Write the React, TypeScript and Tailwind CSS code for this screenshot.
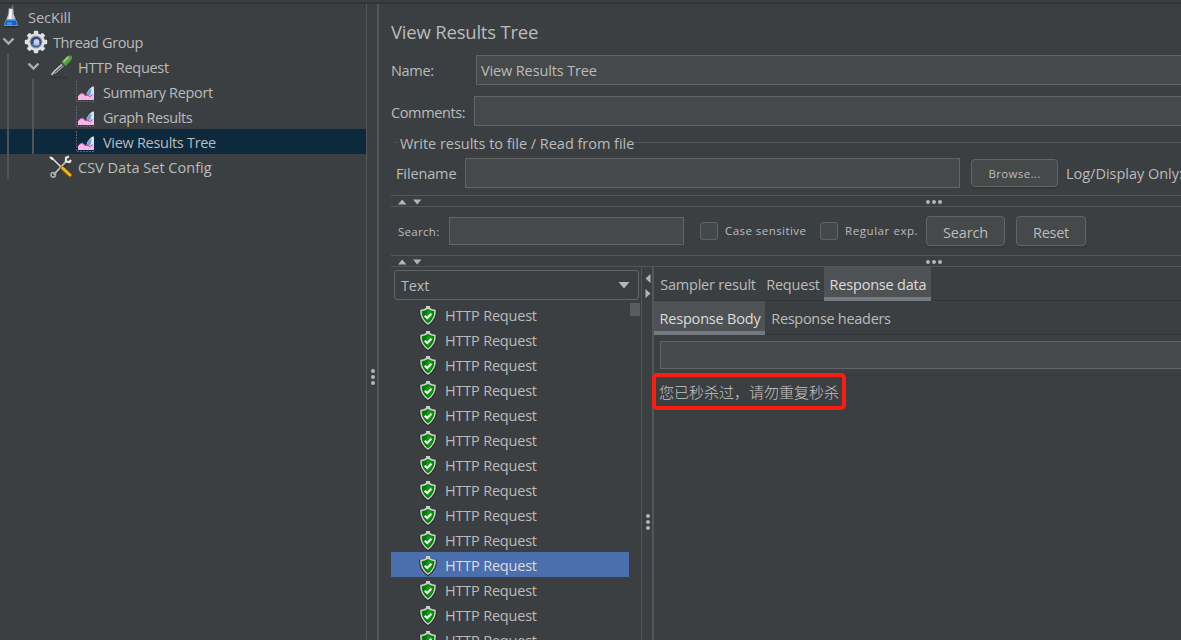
import type { ReactNode } from 'react'

interface TreeNode {
    label: string
    pad: string
    icon: ReactNode
    track: string
    guides: number
    open?: boolean
    selected?: boolean
}

function FlaskIcon() {
    return (
        <svg width="16" height="23" viewBox="0 0 16 23" className="shrink-0">
            <ellipse cx="8" cy="21" rx="7.8" ry="1.8" fill="#2b2d2f" />
            <path d="M5.700 3.500 L10.300 3.500 L10.600 9 L14.800 19.500 Q15 21 13.300 21 L2.700 21 Q1 21 1.200 19.500 L5.400 9 Z" fill="#bcc5cd" />
            <path d="M6.800 4 L8.800 4 L8.500 14 L5.500 14 Z" fill="#f3f7fa" />
            <path d="M3.800 14 L12.200 14 L14.300 19.500 Q14.300 20.600 13.200 20.600 L2.800 20.600 Q1.700 20.600 1.700 19.500 Z" fill="#0f62c4" />
            <path d="M4.400 14 H11.600 L12.200 15.500 H3.800 Z" fill="#62a9ee" />
            <path d="M4.500 17 L9.500 17.500 L8.500 20 L3.500 19.500 Z" fill="#3f92ec" />
            <path d="M10 0.500 L8.800 4" stroke="#777b7e" strokeWidth="1.400" />
        </svg>
    )
}

function GearIcon() {
    return (
        <svg width="24" height="24" viewBox="0 0 24 24" className="shrink-0">
            <g fill="#dfe1e2">
                <rect x="9.800" y="0.800" width="4.400" height="22.400" rx="1" />
                <rect x="9.800" y="0.800" width="4.400" height="22.400" rx="1" transform="rotate(45 12 12)" />
                <rect x="9.800" y="0.800" width="4.400" height="22.400" rx="1" transform="rotate(90 12 12)" />
                <rect x="9.800" y="0.800" width="4.400" height="22.400" rx="1" transform="rotate(135 12 12)" />
                <circle cx="12" cy="12" r="8.800" />
            </g>
            <circle cx="12" cy="12" r="6.400" fill="#8b98ad" />
            <circle cx="12" cy="12" r="5.300" fill="#2c4a82" />
            <path d="M8 14 A4.800 4.800 0 0 0 16.300 14 L14 12 Z" fill="#6f9ad4" />
            <circle cx="12.500" cy="11.800" r="2.900" fill="#ccd3dd" />
        </svg>
    )
}

function PipetteIcon() {
    return (
        <svg width="24" height="24" viewBox="0 0 24 24" className="shrink-0">
            <path d="M3 22.500 H18" stroke="#303234" strokeWidth="1.200" />
            <path d="M1.500 21 L4 15.500 L12.500 7.500 L16 11 L7.500 18.800 Z" fill="#242627" />
            <path d="M2.500 20 L5.500 16 L13.500 8.800" stroke="#c4c6c7" strokeWidth="1.800" fill="none" />
            <path d="M4.500 19 L7.800 17 L15 10.500" stroke="#9da0a2" strokeWidth="1.400" fill="none" />
            <path d="M11.500 6.500 L17 12" stroke="#35522c" strokeWidth="2" />
            <path d="M12.500 7 L17.500 1.900 Q20.500 -0.200 22.500 1 Q23.800 3.200 21.800 5.700 L16.700 11 Z" fill="#559c45" />
            <path d="M14.500 6.700 L19.500 2" stroke="#93cb7f" strokeWidth="2" />
        </svg>
    )
}

function ChartIcon() {
    return (
        <svg width="22" height="22" viewBox="0 0 22 22" className="shrink-0">
            <path d="M1.500 0 V20.500 H20" stroke="#606365" strokeWidth="1" strokeDasharray="2 1" fill="none" />
            <path d="M11 18 L12 11.500 L14.500 8 L17 5.800 L19 5.500 V18 Z" fill="#d3e4f7" />
            <path d="M11.500 14.500 L12.500 11.500 L15 8.500 L16.500 8 L15.500 13.500 Z" fill="#6b9edc" />
            <path d="M3 19 V15 L5 12.800 L7.500 12 L10 14.300 L13 14.300 L15 15.500 L17.500 13.500 L19 14.500 V19 Z" fill="#f6b4e8" />
            <path d="M3 15 L5 12.800 L7.500 12 L10 14.300 L13 14.300 L15 15.500 L17.500 13.500" stroke="#a9458f" strokeWidth="1" fill="none" />
        </svg>
    )
}

function ToolsIcon() {
    return (
        <svg width="24" height="24" viewBox="0 0 24 24" className="shrink-0" fill="none">
            <path d="M4 21 L17 7" stroke="#202223" strokeWidth="4" />
            <path d="M4.500 20 L17 6.500" stroke="#b0b2b3" strokeWidth="2.200" />
            <path d="M20 1.600 L17 2.800 L17 6.500 L20.500 7 L22 5" stroke="#e2e3e3" strokeWidth="2.200" />
            <circle cx="4.300" cy="19.800" r="2.300" stroke="#a9abac" strokeWidth="1.600" />
            <path d="M2.500 2.500 L13 13" stroke="#d8dadb" strokeWidth="1.600" />
            <path d="M1 2 L4 4.500" stroke="#eeeeee" strokeWidth="2.200" />
            <path d="M13.500 13.500 L21 20.500" stroke="#6d4a00" strokeWidth="4.600" strokeLinecap="round" />
            <path d="M13.500 13 L21 20" stroke="#f2b51c" strokeWidth="3" strokeLinecap="round" />
        </svg>
    )
}

function ShieldIcon() {
    return (
        <svg width="20" height="22" viewBox="0 0 20 22" className="shrink-0">
            <path d="M10 1.500 L12.500 3 Q15.500 4.500 18.800 4.500 Q19.800 15 10 21.500 Q0.200 15 1.200 4.500 Q4.500 4.500 7.500 3 Z" fill="#2b2d2e" />
            <path d="M8 1 H12 V3 Q14.500 4.500 17.800 4.800 Q18.700 14 10 20 Q1.300 14 2.200 4.800 Q5.500 4.500 8 3 Z" fill="#c9cfc9" />
            <path d="M10 4 Q13 6 16.200 6.300 Q16.500 13.400 10 18.300 Q3.500 13.400 3.800 6.300 Q7 6 10 4 Z" fill="#047808" />
            <path d="M10 5 Q12.500 6.500 15 6.900 Q14.800 12.500 10 16.800 Q8 14 8 10 Q8 7 10 5 Z" fill="#0aa012" />
            <path d="M6.700 10.700 L9.200 13 L13.400 8.800" stroke="#ffffff" strokeWidth="2" fill="none" />
        </svg>
    )
}

const TREE: TreeNode[] = [
    { label: 'SecKill', pad: 'pl-[3px] gap-[9px]', track: 'tracking-[0px]', icon: <FlaskIcon />, guides: 0 },
    { label: 'Thread Group', pad: 'pl-[2px] gap-[5px]', track: 'tracking-[-0.38px]', icon: <GearIcon />, open: true, guides: 0 },
    { label: 'HTTP Request', pad: 'pl-[27px] gap-[5px]', track: 'tracking-[-0.28px]', icon: <PipetteIcon />, open: true, guides: 1 },
    { label: 'Summary Report', pad: 'pl-[75px] gap-[6px]', track: 'tracking-[-0.33px]', icon: <ChartIcon />, guides: 2 },
    { label: 'Graph Results', pad: 'pl-[75px] gap-[6px]', track: 'tracking-[-0.42px]', icon: <ChartIcon />, guides: 2 },
    { label: 'View Results Tree', pad: 'pl-[75px] gap-[6px]', track: 'tracking-[-0.3px]', icon: <ChartIcon />, guides: 2, selected: true },
    { label: 'CSV Data Set Config', pad: 'pl-[49px] gap-[5px]', track: 'tracking-[0.02px]', icon: <ToolsIcon />, guides: 1 },
]

const SAMPLES = Array.from({ length: 14 }, (_, i) => ({ id: i, label: 'HTTP Request', selected: i === 10 }))

function TreeRow({ node }: { node: TreeNode }) {
    return (
        <div className={`relative flex h-[25px] items-center ${node.pad} ${node.selected ? 'bg-[#0d293e]' : ''}`}>
            {node.guides > 0 && <span className="absolute top-0 left-[7px] h-full w-[2px] bg-[#515355]" />}
            {node.guides > 1 && <span className="absolute top-0 left-[32px] h-full w-[2px] bg-[#515355]" />}
            {node.open && (
                <svg width="13" height="9" viewBox="0 0 13 9" className="mr-[4px] shrink-0">
                    <path d="M1.500 1.500 L6.500 6.500 L11.500 1.500" stroke="#adadad" strokeWidth="2.400" fill="none" />
                </svg>
            )}
            {node.icon}
            <span className={`pt-[4px] whitespace-nowrap ${node.track}`}>{node.label}</span>
        </div>
    )
}

function Dots({ vertical }: { vertical?: boolean }) {
    return (
        <div className={`flex gap-[2px] ${vertical ? 'flex-col' : ''}`}>
            <span className="size-[4px] rounded-full bg-[#b4b4b4]" />
            <span className="size-[4px] rounded-full bg-[#b4b4b4]" />
            <span className="size-[4px] rounded-full bg-[#b4b4b4]" />
        </div>
    )
}

function HorizontalDivider() {
    return (
        <div className="flex h-[12px] items-center border-y border-[#555555] pt-[2px] pl-[7px]">
            <svg width="24" height="6" viewBox="0 0 24 6">
                <path d="M0 5.500 L4.200 0.500 L8.400 5.500 Z M15 0.500 H23.400 L19.200 5.500 Z" fill="#b4b4b4" />
            </svg>
            <div className="ml-[504px]">
                <Dots />
            </div>
        </div>
    )
}

function Field({ className, children }: { className: string; children?: ReactNode }) {
    return (
        <div className={`flex shrink-0 items-center border border-[#646464] bg-[#45494a] ${className}`}>
            {children}
        </div>
    )
}

function Button({ className, children }: { className: string; children: ReactNode }) {
    return (
        <button className={`shrink-0 rounded-[4px] border border-[#646464] bg-[#45494a] shadow-[0_2px_0_#36393a] ${className}`}>
            {children}
        </button>
    )
}

function Checkbox({ label, className }: { label: string; className: string }) {
    return (
        <label className={`flex shrink-0 items-center text-[11.5px] whitespace-nowrap ${className}`}>
            <span className="mr-[7px] mt-[-1px] size-[18px] rounded-[3px] border border-[#646464] bg-[#43494a]" />
            {label}
        </label>
    )
}

function Tab({ label, active, className }: { label: string; active?: boolean; className: string }) {
    return (
        <div className={`flex h-[34px] shrink-0 items-center justify-center pl-px whitespace-nowrap ${active ? 'border-b-4 border-[#747a80] bg-[#4e5254] pt-[6px] text-[#dddddd]' : 'pt-[2px]'} ${className}`}>
            {label}
        </div>
    )
}

function TestPlan() {
    return (
        <div className="w-[366px] shrink-0">
            {TREE.map((node) => (
                <TreeRow key={node.label} node={node} />
            ))}
        </div>
    )
}

function SampleList() {
    return (
        <div className="flex w-[250px] shrink-0 flex-col">
            <div className="mt-[3px] ml-[3px] flex h-[30px] w-[245px] shrink-0 items-center justify-between rounded-[3px] border border-[#646464] pr-[8px] pl-[6px]">
                <span className="pt-[2px]">Text</span>
                <svg width="12" height="8" viewBox="0 0 12 8">
                    <path d="M0.500 1 H11.500 L6 7.500 Z" fill="#b4b4b4" />
                </svg>
            </div>
            <div className="mt-[2px] flex min-h-0 flex-1">
                <div className="w-[238px] overflow-hidden">
                    {SAMPLES.map((sample) => (
                        <div key={sample.id} className={`flex h-[25px] items-center gap-[7px] pt-[2px] pl-[27px] ${sample.selected ? 'bg-[#4b6eaf] text-[#dddddd]' : ''}`}>
                            <ShieldIcon />
                            <span className="pt-[2px] tracking-[-0.2px]">{sample.label}</span>
                        </div>
                    ))}
                </div>
                <div className="mt-px ml-[1px] h-[13px] w-[10px] bg-[#595b5d]" />
            </div>
        </div>
    )
}

function ResponsePanel() {
    return (
        <div className="min-w-0 flex-1">
            <div className="flex h-[34px] border-b border-[#333638]">
                <Tab label="Sampler result" className="w-[107px] tracking-[-0.2px]" />
                <Tab label="Request" className="w-[63px] tracking-[-0.2px]" />
                <Tab label="Response data" active className="w-[107px] tracking-[-0.2px]" />
            </div>
            <div className="flex h-[34px] border-b border-[#333638]">
                <Tab label="Response Body" active className="w-[111px] tracking-[-0.2px]" />
                <Tab label="Response headers" className="w-[131px] tracking-[-0.3px]" />
            </div>
            <div className="h-[41px] overflow-hidden border-b border-[#37393b] pt-[6px] pl-[6px]">
                <Field className="h-[28px] w-[540px]" />
            </div>
            <div className="relative mt-[-3px] ml-[-2px] flex h-[37px] w-[194px] items-center rounded-[5px] border-4 border-[#fc1d12] pl-[3px] font-['Noto_Sans_CJK_SC',sans-serif] text-[15px] font-light tracking-normal whitespace-nowrap text-[#c4c4c4]">
                您已秒杀过，请勿重复秒杀
            </div>
        </div>
    )
}

export default function App() {
    return (
        <div className="flex h-[640px] w-[1181px] flex-col overflow-hidden bg-[#3c3f41] font-['Open_Sans',sans-serif] text-[14.5px] leading-none tracking-[-0.13px] text-[#bbbbbb]">
            <div className="mt-[2px] h-[2px] shrink-0 bg-[#323537]" />
            <div className="flex min-h-0 flex-1">
                <TestPlan />
                <div className="flex w-[13px] shrink-0 items-center justify-center border-r-2 border-l border-r-[#555555] border-l-[#555555] pt-[110px] pl-px">
                    <Dots vertical />
                </div>
                <div className="flex min-w-0 flex-1 flex-col pl-[12px]">
                    <h1 className="flex h-[51px] shrink-0 items-center pt-[6px] text-[18.5px] font-normal tracking-[-0.2px]">View Results Tree</h1>
                    <div className="flex h-[30px] shrink-0 items-center">
                        <span className="w-[85px] shrink-0 pt-[2px] tracking-[-0.3px]">Name:</span>
                        <Field className="h-[30px] w-[720px] pt-[2px] pl-[4px]">View Results Tree</Field>
                    </div>
                    <div className="mt-[11px] flex h-[30px] shrink-0 items-center">
                        <span className="w-[83px] shrink-0 pt-[4px] tracking-[-0.38px]">Comments:</span>
                        <Field className="h-[30px] w-[720px]" />
                    </div>
                    <div className="mt-[8px] flex h-[18px] shrink-0 items-center pl-[3px]">
                        <span className="mt-[-1px] h-px w-[3px] bg-[#555555]" />
                        <span className="pt-[2px] pl-[3px] tracking-[-0.02px] whitespace-nowrap">Write results to file / Read from file</span>
                        <span className="mt-[-1px] h-px flex-1 bg-[#555555]" />
                    </div>
                    <div className="mt-[6px] flex h-[30px] shrink-0 items-center pl-[5px]">
                        <span className="w-[69px] shrink-0 pt-[2px]">Filename</span>
                        <Field className="h-[30px] w-[495px]" />
                        <Button className="ml-[11px] h-[28px] w-[87px] pt-[1px] text-[11.5px] tracking-[0.35px]">Browse...</Button>
                        <span className="ml-[8px] shrink-0 pt-[2px] tracking-[-0.02px] whitespace-nowrap">Log/Display Only:</span>
                    </div>
                    <div className="mt-[7px] shrink-0">
                        <HorizontalDivider />
                    </div>
                    <div className="flex h-[48px] shrink-0 items-center pl-[7px]">
                        <span className="w-[51px] shrink-0 pt-[2px] text-[11.5px] tracking-[0.3px]">Search:</span>
                        <Field className="h-[28px] w-[235px]" />
                        <Checkbox label="Case sensitive" className="ml-[16px] w-[120px] tracking-[0.45px]" />
                        <Checkbox label="Regular exp." className="w-[106px] tracking-[0.57px]" />
                        <Button className="h-[30px] w-[79px] pt-[4px]">Search</Button>
                        <Button className="ml-[11px] h-[30px] w-[70px] pt-[4px] tracking-[-0.3px]">Reset</Button>
                    </div>
                    <div className="shrink-0">
                        <HorizontalDivider />
                    </div>
                    <div className="flex min-h-0 flex-1">
                        <SampleList />
                        <div className="flex w-[13px] shrink-0 flex-col items-center border-r-2 border-l border-r-[#555555] border-l-[#555555] pt-[6px] pl-px">
                            <svg width="6" height="26" viewBox="0 0 6 26" className="ml-[1px]">
                                <path d="M5.500 1 V10 L0.500 5.500 Z M0.500 16 V25 L5.500 20.500 Z" fill="#b4b4b4" />
                            </svg>
                            <div className="mt-[215px]">
                                <Dots vertical />
                            </div>
                        </div>
                        <ResponsePanel />
                    </div>
                </div>
            </div>
        </div>
    )
}
